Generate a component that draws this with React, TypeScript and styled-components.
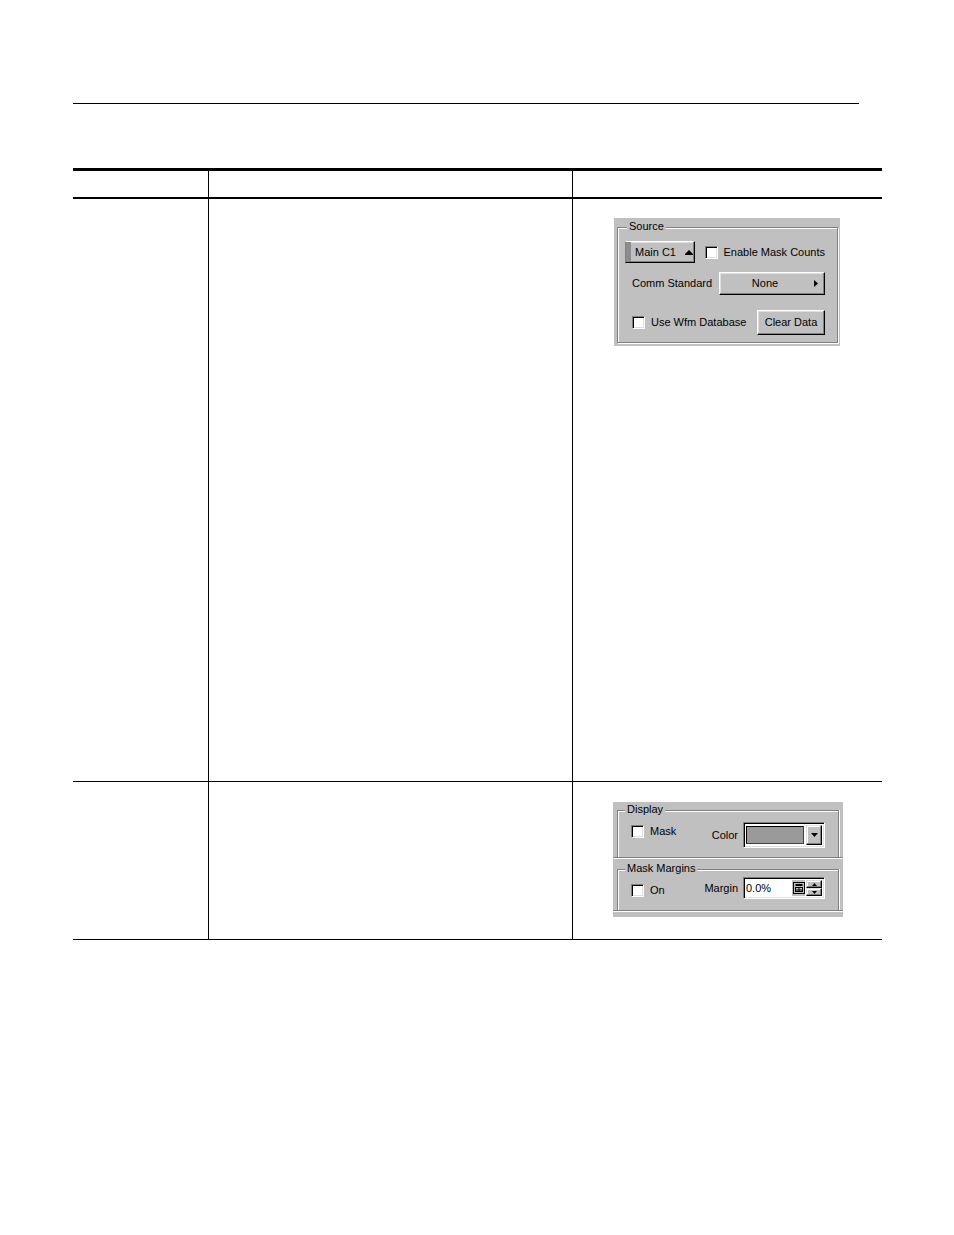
import React from "react";
import styled, { createGlobalStyle } from "styled-components";

const GlobalStyle = createGlobalStyle`
  html, body { margin: 0; padding: 0; background: #fff; }
  body { font-family: "Liberation Sans", Arial, sans-serif; }
  * { box-sizing: border-box; }
`;

const Page = styled.div`
  width: 954px;
  min-height: 1235px;
  padding-top: 103px;
`;

const TopRule = styled.div`
  margin-left: 73px;
  width: 786px;
  height: 1px;
  background: #000;
`;

const Table = styled.div`
  margin: 64px 0 0 73px;
  width: 809px;
  border-top: 3px solid #000;
`;

const Row = styled.div<{ $h: number; $rule: number }>`
  display: grid;
  grid-template-columns: 135px 364px 310px;
  height: ${(p) => p.$h + p.$rule}px;
  border-bottom: ${(p) => p.$rule}px solid #000;
`;

const Cell = styled.div<{ $first?: boolean; $padTop?: number; $padLeft?: number }>`
  border-left: ${(p) => (p.$first ? 0 : 1)}px solid #000;
  padding-top: ${(p) => p.$padTop ?? 0}px;
  padding-left: ${(p) => p.$padLeft ?? 0}px;
`;

/* ---------- Windows-style dialog parts ---------- */

const Dialog = styled.div<{ $w: number; $pad: string }>`
  width: ${(p) => p.$w}px;
  padding: ${(p) => p.$pad};
  background: #c0c0c0;
  font-size: 11px;
  line-height: 13px;
  color: #000;
`;

const Frame = styled.div<{ $pad: string; $open?: boolean }>`
  position: relative;
  padding: ${(p) => p.$pad};
  border: 1px solid #808080;
  border-bottom: ${(p) => (p.$open ? "none" : "1px solid #808080")};
  box-shadow: ${(p) =>
    p.$open ? "inset 1px 1px 0 #fff, 1px 0 0 #fff" : "inset 1px 1px 0 #fff, 1px 1px 0 #fff"};
  display: flex;
  flex-direction: column;
`;

const Legend = styled.span<{ $left: number }>`
  position: absolute;
  top: -8px;
  left: ${(p) => p.$left}px;
  padding: 0 2px;
  background: #c0c0c0;
  white-space: nowrap;
`;

const SubPanel = styled.div<{ $padTop: number }>`
  padding: ${(p) => p.$padTop}px 4px 0 4px;
  border-bottom: 1px solid #808080;
  box-shadow: 0 1px 0 #fff;
  margin-bottom: 1px;
`;

const FlexRow = styled.div<{ $mt?: number; $pl?: number; $pr?: number; $between?: boolean; $align?: string }>`
  display: flex;
  align-items: ${(p) => p.$align ?? "center"};
  justify-content: ${(p) => (p.$between ? "space-between" : "flex-start")};
  margin-top: ${(p) => p.$mt ?? 0}px;
  padding-left: ${(p) => p.$pl ?? 0}px;
  padding-right: ${(p) => p.$pr ?? 0}px;
`;

const PushButton = styled.button<{ $w: number; $h: number }>`
  width: ${(p) => p.$w}px;
  height: ${(p) => p.$h}px;
  margin: 0;
  padding: 0;
  font: inherit;
  color: #000;
  background: #c0c0c0;
  border: 1px solid;
  border-color: #fff #000 #000 #fff;
  box-shadow: inset -1px -1px 0 #808080, inset 1px 1px 0 #dfdfdf;
  display: flex;
  align-items: center;
  justify-content: center;
  white-space: nowrap;
`;

const SourceButton = styled(PushButton)`
  justify-content: flex-start;
  padding-left: 9px;
  border-left-color: #808080;
  box-shadow: inset -1px -1px 0 #808080, inset 5px 0 0 #8c8c8c, inset 0 1px 0 #dfdfdf;
  gap: 9px;
`;

const MenuButton = styled(PushButton)`
  justify-content: space-between;
  padding: 0 6px 0 0;
`;

const ButtonText = styled.span`
  flex: 1;
  text-align: center;
  padding-right: 4px;
`;

const CheckItem = styled.label<{ $mt?: number; $ml?: number }>`
  display: flex;
  align-items: center;
  gap: 6px;
  margin-top: ${(p) => p.$mt ?? 0}px;
  margin-left: ${(p) => p.$ml ?? 0}px;
  white-space: nowrap;
`;

const CheckBox = styled.span`
  display: block;
  flex: none;
  width: 13px;
  height: 13px;
  background: #fff;
  border: 1px solid;
  border-color: #808080 #fff #fff #808080;
  box-shadow: inset 1px 1px 0 #000, inset -1px -1px 0 #dfdfdf;
`;

const Label = styled.span`
  white-space: nowrap;
`;

const FieldGroup = styled.div`
  display: flex;
  align-items: center;
  gap: 5px;
`;

const Sunken = styled.div<{ $w: number; $h: number }>`
  width: ${(p) => p.$w}px;
  height: ${(p) => p.$h}px;
  display: flex;
  align-items: stretch;
  background: #fff;
  border: 1px solid;
  border-color: #808080 #fff #fff #808080;
  box-shadow: inset 1px 1px 0 #000, inset -1px -1px 0 #dfdfdf;
  padding: 2px;
`;

const Swatch = styled.div`
  flex: 1;
  margin: 1px 2px 1px 0;
  background: #9a9a9a;
  border: 1px solid #000;
  border-right-color: #404040;
  border-bottom-color: #404040;
`;

const SmallButton = styled.div`
  width: 16px;
  flex: 1;
  background: #c0c0c0;
  border: 1px solid;
  border-color: #dfdfdf #000 #000 #dfdfdf;
  box-shadow: inset -1px -1px 0 #808080, inset 1px 1px 0 #fff;
  display: flex;
  align-items: center;
  justify-content: center;
`;

const DropButton = styled(SmallButton)`
  flex: none;
  width: 16px;
`;

const FieldText = styled.span`
  flex: 1;
  align-self: center;
  color: #000;
  white-space: nowrap;
`;

const IconSlot = styled.div`
  width: 13px;
  display: flex;
  align-items: center;
  justify-content: center;
  background: #c0c0c0;
  margin-right: 1px;
`;

const Spinner = styled.div`
  width: 16px;
  display: flex;
  flex-direction: column;
`;

const UpTri = () => (
  <svg width="8" height="5" viewBox="0 0 8 5" aria-hidden>
    <polygon points="0,4 4,0 8,4" fill="#000" />
    <rect x="0" y="4" width="8" height="1" fill="#000" />
  </svg>
);

const RightTri = () => (
  <svg width="4" height="7" viewBox="0 0 4 7" aria-hidden>
    <polygon points="0,0 4,3.5 0,7" fill="#000" />
  </svg>
);

const DownTri = () => (
  <svg width="7" height="4" viewBox="0 0 7 4" aria-hidden>
    <polygon points="0,0 7,0 3.5,4" fill="#000" />
  </svg>
);

const SmallUp = () => (
  <svg width="5" height="3" viewBox="0 0 5 3" aria-hidden>
    <polygon points="0,3 2.5,0 5,3" fill="#000" />
  </svg>
);

const SmallDown = () => (
  <svg width="5" height="3" viewBox="0 0 5 3" aria-hidden>
    <polygon points="0,0 5,0 2.5,3" fill="#000" />
  </svg>
);

const KeypadIcon = () => (
  <svg width="12" height="12" viewBox="0 0 12 12" aria-hidden>
    <rect x="0.5" y="0.5" width="11" height="11" fill="#c0c0c0" stroke="#000" />
    <rect x="2.5" y="2" width="7" height="2" fill="#000" />
    <rect x="2.5" y="5.5" width="7" height="4" fill="none" stroke="#000" />
    <rect x="5.5" y="5.5" width="1" height="4" fill="#000" />
    <rect x="2.5" y="7.5" width="7" height="1" fill="#000" />
  </svg>
);

const SourcePanel = () => (
  <Dialog $w={226} $pad="9px 2px 3px 3px">
    <Frame $pad="13px 12px 7px 7px">
      <Legend $left={9}>Source</Legend>
      <FlexRow>
        <SourceButton $w={73} $h={22}>
          <span>Main C1</span>
          <UpTri />
        </SourceButton>
        <CheckItem $ml={10}>
          <CheckBox />
          <Label>Enable Mask Counts</Label>
        </CheckItem>
      </FlexRow>
      <FlexRow $mt={9} $pl={7} $between>
        <Label>Comm Standard</Label>
        <MenuButton $w={106} $h={23}>
          <ButtonText>None</ButtonText>
          <RightTri />
        </MenuButton>
      </FlexRow>
      <FlexRow $mt={15} $pl={7} $between>
        <CheckItem>
          <CheckBox />
          <Label>Use Wfm Database</Label>
        </CheckItem>
        <PushButton $w={68} $h={25}>Clear Data</PushButton>
      </FlexRow>
    </Frame>
  </Dialog>
);

const DisplayPanel = () => (
  <Dialog $w={230} $pad="0 0 5px 0">
    <SubPanel $padTop={8}>
      <Frame $pad="11px 13px 9px 13px" $open>
        <Legend $left={7}>Display</Legend>
        <FlexRow $between $align="flex-start">
          <CheckItem $mt={3}>
            <CheckBox />
            <Label>Mask</Label>
          </CheckItem>
          <FieldGroup>
            <Label>Color</Label>
            <Sunken $w={82} $h={26}>
              <Swatch />
              <DropButton>
                <DownTri />
              </DropButton>
            </Sunken>
          </FieldGroup>
        </FlexRow>
      </Frame>
    </SubPanel>
    <SubPanel $padTop={10}>
      <Frame $pad="7px 13px 11px 13px" $open>
        <Legend $left={7}>Mask Margins</Legend>
        <FlexRow $between $align="flex-start">
          <CheckItem $mt={7}>
            <CheckBox />
            <Label>On</Label>
          </CheckItem>
          <FieldGroup>
            <Label>Margin</Label>
            <Sunken $w={82} $h={22}>
              <FieldText>0.0%</FieldText>
              <IconSlot>
                <KeypadIcon />
              </IconSlot>
              <Spinner>
                <SmallButton>
                  <SmallUp />
                </SmallButton>
                <SmallButton>
                  <SmallDown />
                </SmallButton>
              </Spinner>
            </Sunken>
          </FieldGroup>
        </FlexRow>
      </Frame>
    </SubPanel>
  </Dialog>
);

export default function App() {
  return (
    <>
      <GlobalStyle />
      <Page>
        <TopRule />
        <Table>
          <Row $h={26} $rule={2}>
            <Cell $first />
            <Cell />
            <Cell />
          </Row>
          <Row $h={582} $rule={1}>
            <Cell $first />
            <Cell />
            <Cell $padTop={19} $padLeft={41}>
              <SourcePanel />
            </Cell>
          </Row>
          <Row $h={157} $rule={1}>
            <Cell $first />
            <Cell />
            <Cell $padTop={20} $padLeft={40}>
              <DisplayPanel />
            </Cell>
          </Row>
        </Table>
      </Page>
    </>
  );
}
